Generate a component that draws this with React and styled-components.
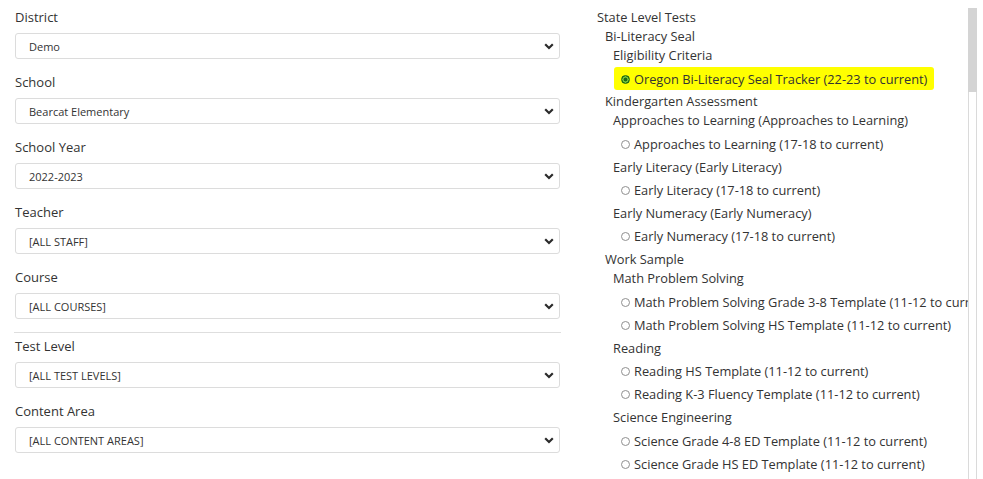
import React from 'react'
import styled, { createGlobalStyle } from 'styled-components'

const GlobalStyle = createGlobalStyle`
  body {
    margin: 0;
    background: #fff;
    font-family: "Open Sans", "Liberation Sans", sans-serif;
    color: #333;
    overflow: hidden;
  }
`;

const Page = styled.div`
  display: flex;
  align-items: flex-start;
  gap: 37px;
  padding-left: 15px;
  height: 479px;
`;

const Left = styled.div`
  width: 545px;
  padding-top: 7px;
`;

const Group = styled.div`
  margin-bottom: ${props => props.last ? '0' : '13px'};
`;

const Label = styled.div`
  font-size: 13px;
  line-height: 20px;
  margin-bottom: 6px;
  color: #333;
`;

const Select = styled.div`
  height: 26px;
  box-sizing: border-box;
  border: 1px solid #dcdcdc;
  border-radius: 3px;
  display: flex;
  align-items: center;
  justify-content: space-between;
  padding: 0 5px 0 13px;
  font-size: 11px;
  color: #333;
`;

const Divider = styled.hr`
  border: 0;
  border-top: 1px solid #dedede;
  margin: 0 -1px 3px;
`;

const Right = styled.div`
  width: 380px;
  height: 471px;
  margin-top: 8px;
  display: flex;
`;

const Tree = styled.div`
  flex: 1;
  overflow: hidden;
  font-size: 12.8px;
  color: #333;
`;

const Heading = styled.div`
  line-height: 19px;
  padding-left: ${props => props.level * 8}px;
  white-space: nowrap;
`;

const RadioGroup = styled.div`
  padding: 2px 0;
`;

const RadioRow = styled.div`
  display: flex;
  align-items: center;
  gap: 4px;
  width: fit-content;
  height: 23.25px;
  margin-left: 17px;
  padding: 0 7px;
  border-radius: 3px;
  white-space: nowrap;
  background: ${props => props.highlight ? '#ffff00' : 'transparent'};
`;

const Radio = styled.span`
  width: 9px;
  height: 9px;
  flex: none;
  box-sizing: border-box;
  border-radius: 50%;
  border: 1px solid ${props => props.checked ? '#1d6a12' : '#8f8f8f'};
  background: ${props => props.checked
    ? 'radial-gradient(circle, #1d6a12 0 1.6px, #74c23a 2.2px 3px, #1d6a12 3.4px)'
    : '#fff'};
  margin-top: 1px;
`;

const Track = styled.div`
  width: 9px;
  box-sizing: border-box;
  border-left: 1px solid #dadada;
  border-right: 1px solid #dadada;
`;

const Thumb = styled.div`
  height: 84px;
  margin: 0 -1px;
  background: #d4d4d4;
`;

const Chevron = () => (
  <svg width="10" height="7" viewBox="0 0 10 7">
    <path d="M1.2 1.3 L5 5 L8.8 1.3" fill="none" stroke="#2b2b2b" strokeWidth="2.2" />
  </svg>
);

const fields = [
  ['District', 'Demo'],
  ['School', 'Bearcat Elementary'],
  ['School Year', '2022-2023'],
  ['Teacher', '[ALL STAFF]'],
  ['Course', '[ALL COURSES]'],
];

const fields2 = [
  ['Test Level', '[ALL TEST LEVELS]'],
  ['Content Area', '[ALL CONTENT AREAS]'],
];

const Field = ({ label, value, last }) => (
  <Group last={last}>
    <Label>{label}</Label>
    <Select>
      <span>{value}</span>
      <Chevron />
    </Select>
  </Group>
);

const Option = ({ children, checked }) => (
  <RadioRow highlight={checked}>
    <Radio checked={checked} />
    <span>{children}</span>
  </RadioRow>
);

const App = () => {
  return (
    <>
      <GlobalStyle />
      <Page>
        <Left>
          {fields.map(([l, v]) => <Field key={l} label={l} value={v} />)}
          <Divider />
          {fields2.map(([l, v], i) => <Field key={l} label={l} value={v} last={i === fields2.length - 1} />)}
        </Left>
        <Right>
          <Tree>
            <Heading level={0}>State Level Tests</Heading>
            <Heading level={1}>Bi-Literacy Seal</Heading>
            <Heading level={2}>Eligibility Criteria</Heading>
            <RadioGroup>
              <Option checked>Oregon Bi-Literacy Seal Tracker (22-23 to current)</Option>
            </RadioGroup>
            <Heading level={1}>Kindergarten Assessment</Heading>
            <Heading level={2}>Approaches to Learning (Approaches to Learning)</Heading>
            <RadioGroup>
              <Option>Approaches to Learning (17-18 to current)</Option>
            </RadioGroup>
            <Heading level={2}>Early Literacy (Early Literacy)</Heading>
            <RadioGroup>
              <Option>Early Literacy (17-18 to current)</Option>
            </RadioGroup>
            <Heading level={2}>Early Numeracy (Early Numeracy)</Heading>
            <RadioGroup>
              <Option>Early Numeracy (17-18 to current)</Option>
            </RadioGroup>
            <Heading level={1}>Work Sample</Heading>
            <Heading level={2}>Math Problem Solving</Heading>
            <RadioGroup>
              <Option>Math Problem Solving Grade 3-8 Template (11-12 to current)</Option>
              <Option>Math Problem Solving HS Template (11-12 to current)</Option>
            </RadioGroup>
            <Heading level={2}>Reading</Heading>
            <RadioGroup>
              <Option>Reading HS Template (11-12 to current)</Option>
              <Option>Reading K-3 Fluency Template (11-12 to current)</Option>
            </RadioGroup>
            <Heading level={2}>Science Engineering</Heading>
            <RadioGroup>
              <Option>Science Grade 4-8 ED Template (11-12 to current)</Option>
              <Option>Science Grade HS ED Template (11-12 to current)</Option>
            </RadioGroup>
          </Tree>
          <Track>
            <Thumb />
          </Track>
        </Right>
      </Page>
    </>
  )
}

export default App
